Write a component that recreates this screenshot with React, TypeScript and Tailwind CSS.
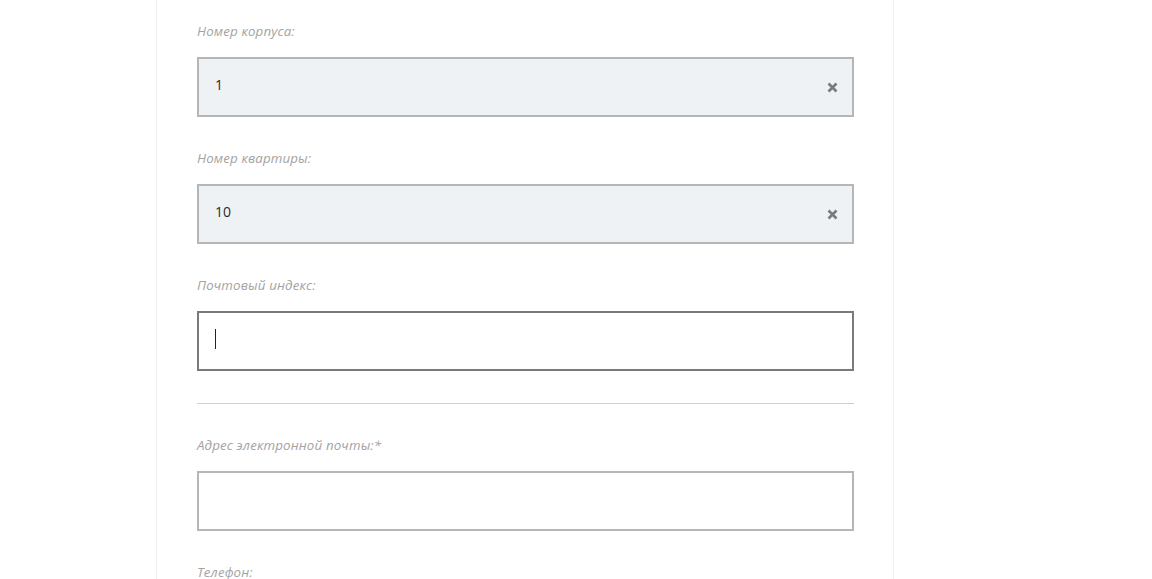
import React from "react";

const font = { fontFamily: '"Open Sans", "Noto Sans", sans-serif' };

function Cross() {
  return (
    <svg width="11" height="11" viewBox="0 0 11 11" className="shrink-0">
      <path d="M1.5 1.5 L9.5 9.5 M9.5 1.5 L1.5 9.5" stroke="#7a7a7a" strokeWidth="2.6" strokeLinecap="butt" />
    </svg>
  );
}

function Label({ children }: { children: React.ReactNode }) {
  return (
    <div className="h-[18px] mb-[17px] text-[13.3px] leading-[18px] italic tracking-[0.15px] text-[#a3a3a3]">{children}</div>
  );
}

function Filled({ value }: { value: string }) {
  return (
    <div className="h-[60px] border-2 border-[#b4b6b7] bg-[#eef2f4] flex items-center pl-[16px] pr-[14px]">
      <span className="flex-1 text-[14px] text-[#2a2a2a] -mt-[6px]">{value}</span>
      <Cross />
    </div>
  );
}

export default function App() {
  return (
    <div className="w-[1152px] h-[579px] overflow-hidden bg-white" style={font}>
      <div className="ml-[156px] w-[738px] h-[579px] border-x border-[#f1f1f1] pt-[22px] pl-[40px] pr-[39px]">
        <Label>Номер корпуса:</Label>
        <Filled value="1" />
        <div className="h-[32px]" />
        <Label>Номер квартиры:</Label>
        <Filled value="10" />
        <div className="h-[32px]" />
        <Label>Почтовый индекс:</Label>
        <div className="h-[60px] border-2 border-[#7a7a7a] bg-white flex items-center pl-[16px]">
          <div className="w-px h-[20px] bg-[#222] -mt-[4px]" />
        </div>
        <div className="h-[32px]" />
        <div className="h-px bg-[#cfcfcf]" />
        <div className="h-[32px]" />
        <Label>Адрес электронной почты:*</Label>
        <div className="h-[60px] border-2 border-[#b4b6b7] bg-white" />
        <div className="h-[32px]" />
        <Label>Телефон:</Label>
      </div>
    </div>
  );
}
